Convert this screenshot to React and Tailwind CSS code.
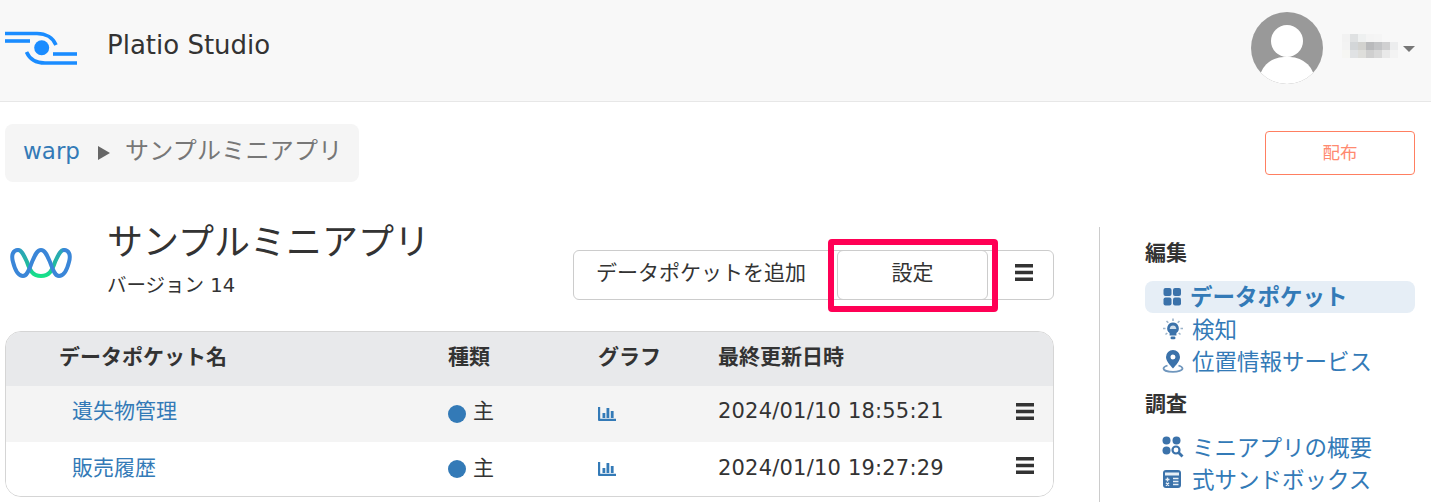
const blurCells = [
  "bg-[#f2f2f2]", "bg-[#dfe1e2]", "bg-[#eef0f0]", "bg-[#f4f4f4]", "bg-[#f5f5f5]", "bg-[#f8f8f8]", "bg-[#f8f8f8]",
  "bg-[#f3f3f3]", "bg-[#d3d6d8]", "bg-[#d2d2cf]", "bg-[#b9babc]", "bg-[#c3c4c6]", "bg-[#d0d0d1]", "bg-[#ecedee]",
  "bg-[#f6f6f3]", "bg-[#e0e2e4]", "bg-[#dededb]", "bg-[#cfcfcf]", "bg-[#d8d8d8]", "bg-[#e9e9e9]", "bg-[#f3f3f3]",
];

function Logo() {
  return (
    <svg width="72" height="36" viewBox="0 0 72 36" fill="none" stroke="#1a8cff" strokeWidth="3.600">
      <path d="M0 3.500H32C41 3.500 48 8 51 15" />
      <path d="M0 11H25" />
      <path d="M21.500 22C25 30 31 33 40 33H72" />
      <path d="M48 24H72" />
      <circle cx="36.700" cy="17.700" r="7.500" fill="#1a8cff" stroke="none" />
    </svg>
  );
}

function AppMark() {
  return (
    <svg width="62" height="32" viewBox="0 0 62 32" fill="none" strokeWidth="4" strokeLinecap="round">
      <defs>
        <linearGradient id="wave" gradientUnits="userSpaceOnUse" x1="0" y1="0" x2="0" y2="32">
          <stop offset="0" stopColor="#2f9fc0" />
          <stop offset="0.5" stopColor="#22b8a0" />
          <stop offset="1" stopColor="#14ea84" />
        </linearGradient>
      </defs>
      <path d="M8 3C12 3 14 9 17 15C20 24 23 29 31 29C39 29 42 24 45 15C48 9 50 3 54 3" stroke="url(#wave)" />
      <path d="M8 3C3 3 1 8 3 15C5 23 8 29 13 29C17 29 19 23 22 15C25 8 27 3 31 3C35 3 37 8 40 15C43 23 45 29 49 29C54 29 57 23 59 15C61 8 59 3 54 3" stroke="#3a86d8" />
    </svg>
  );
}

function Bars({ className = "" }) {
  return (
    <svg width="18" height="17" viewBox="0 0 18 17" fill="#333" className={className}>
      <rect x="0" y="0" width="18" height="3.500" />
      <rect x="0" y="6.750" width="18" height="3.500" />
      <rect x="0" y="13.500" width="18" height="3.500" />
    </svg>
  );
}

function ChartIcon() {
  return (
    <svg width="18" height="16" viewBox="0 0 18 16" fill="#337ab7">
      <path d="M0 1h2.200v11.800H18V15H1a1 1 0 0 1-1-1z" />
      <rect x="4.500" y="7" width="2.800" height="5" />
      <rect x="8.500" y="2" width="2.800" height="10" />
      <rect x="12.800" y="5" width="2.800" height="7" />
    </svg>
  );
}

function GridIcon() {
  return (
    <svg width="20" height="20" viewBox="0 0 20 20" fill="#3b72aa">
      <rect x="1.500" y="1" width="8" height="8" rx="2" />
      <rect x="11" y="1" width="8" height="8" rx="2" />
      <rect x="1.500" y="10.500" width="8" height="8" rx="2" />
      <rect x="11" y="10.500" width="8" height="8" rx="2" />
    </svg>
  );
}

function BulbIcon() {
  return (
    <svg width="22" height="22" viewBox="0 0 22 22" fill="#3b72aa">
      <path d="M11 4.500a5.800 5.800 0 0 1 3.400 10.500V17.500h-6.800V15A5.800 5.800 0 0 1 11 4.500z" />
      <rect x="8.500" y="18.500" width="5" height="2.800" rx="1.400" />
      <path d="M7.800 10a3.300 3.300 0 0 1 6.400 0v1H7.800z" fill="#cfdeeb" />
      <g stroke="#9db4ca" strokeWidth="1.600">
        <path d="M11 0.500v2.500M4.500 3l1.800 1.800M17.500 3l-1.800 1.800M1 10.500h2.500M18.500 10.500H21M3.500 16.500l1.800-1.500M18.500 16.500l-1.800-1.500" />
      </g>
    </svg>
  );
}

function PinIcon() {
  return (
    <svg width="22" height="23" viewBox="0 0 22 23">
      <path fillRule="evenodd" fill="#3b72aa" d="M11 0a7 7 0 0 1 7 7c0 4-4 8-7 11.500C8 15 4 11 4 7a7 7 0 0 1 7-7zm0 4.500a2.500 2.500 0 1 0 0 5 2.500 2.500 0 0 0 0-5z" />
      <path d="M5.500 15.500C3 16.300 1.500 17.300 1.500 18.500c0 2 4.500 3.300 9.500 3.300s9.500-1.300 9.500-3.300c0-1.200-1.500-2.200-4-3" fill="none" stroke="#6f96bd" strokeWidth="1.800" />
    </svg>
  );
}

function OverviewIcon() {
  return (
    <svg width="22" height="22" viewBox="0 0 22 22" fill="#3b72aa">
      <circle cx="4.500" cy="4.500" r="4" />
      <circle cx="14.500" cy="4.500" r="4" />
      <circle cx="4.500" cy="14.500" r="4" />
      <circle cx="14" cy="14" r="3.500" fill="none" stroke="#3b72aa" strokeWidth="2.200" />
      <path d="M16.500 16.500l4 4" stroke="#3b72aa" strokeWidth="2.800" />
    </svg>
  );
}

function CalcIcon() {
  return (
    <svg width="20" height="20" viewBox="0 0 20 20">
      <rect x="1" y="1" width="18" height="18" rx="3" fill="#3b72aa" />
      <rect x="3" y="3.500" width="14" height="3" fill="#e8eff6" />
      <g stroke="#e8eff6" strokeWidth="1.400">
        <path d="M3.500 10.500h4M5.500 8.500v4M11 9.500h5.500M11 12.500h5.500M11 15.500h5.500M4 13.800l3 3M7 13.800l-3 3" />
      </g>
    </svg>
  );
}

function SideLink({ icon, active, children }) {
  return (
    <a className={`flex h-[32px] items-center rounded-lg pl-[17px] text-[22.5px] leading-[32px] text-[#337ab7] ${active ? "bg-[#e6eef6] font-bold" : ""}`}>
      <span className="flex w-[30px] shrink-0 items-center">{icon}</span>
      <span className={active ? "-ml-[2px] pb-[1px]" : "pt-[1px]"}>{children}</span>
    </a>
  );
}

function Row({ name, date, striped, height, lift, barsLift }) {
  return (
    <div className={`flex items-center text-[21px] ${height} ${striped ? "bg-[#f4f4f4]" : "bg-white"}`}>
      <a className={`w-[442px] pl-[66px] text-[#337ab7] ${lift}`}>{name}</a>
      <div className="flex w-[150px] items-center gap-[7px] text-[#333]">
        <span className="h-[18px] w-[18px] rounded-full bg-[#337ab7]" />
        <span className={lift}>主</span>
      </div>
      <div className="flex w-[120px] items-center"><ChartIcon /></div>
      <div className={`w-[298px] tracking-[0.2px] text-[#333] ${lift}`}>{date}</div>
      <Bars className={barsLift} />
    </div>
  );
}

export default function App() {
  return (
    <div className="h-[502px] overflow-hidden bg-white text-[#333] font-['DejaVu_Sans','Noto_Sans_CJK_JP',sans-serif]">
      {/* header */}
      <header className="flex h-[102px] items-start border-b border-[#e7e7e7] bg-[#f8f8f8] pl-[5px] pr-4">
        <div className="mt-[30px]"><Logo /></div>
        <span className="ml-[30px] mt-[26px] text-[26px] leading-[38px]">Platio Studio</span>
        <div className="ml-auto mt-[12px] flex items-center">
          <div className="relative h-[72px] w-[72px] overflow-hidden rounded-full bg-[#999]">
            <span className="absolute left-[20px] top-[13px] h-[32px] w-[32px] rounded-full bg-white" />
            <span className="absolute left-[8px] top-[45px] h-[50px] w-[56px] rounded-full bg-white" />
          </div>
          <div className="ml-[19px] mb-[4px] grid w-[56px] grid-cols-7">
            {blurCells.map((c, i) => (
              <span key={i} className={`h-[8px] ${c}`} />
            ))}
          </div>
          <span className="ml-[5px] mt-[2px] h-0 w-0 border-x-[6px] border-t-[6px] border-x-transparent border-t-[#777]" />
        </div>
      </header>

      {/* breadcrumb row */}
      <div className="mt-[22px] flex items-start justify-between pl-[5px] pr-4">
        <div className="flex h-[58px] w-[354px] items-center rounded-lg bg-[#f5f5f5] pl-[18px] text-[24px]">
          <a className="pb-[4px] text-[23px] text-[#337ab7]">warp</a>
          <span className="ml-[18px] h-0 w-0 border-y-[7px] border-l-[12px] border-y-transparent border-l-[#666]" />
          <span className="ml-[15px] pb-[4px] tracking-[0.25px] text-[#777]">サンプルミニアプリ</span>
        </div>
        <button className="mt-[7px] h-[44px] w-[150px] rounded border border-[#ff7f61] text-[17.5px] text-[#ff8a70]">配布</button>
      </div>

      <div className="flex pl-[5px] pr-4">
        {/* main column */}
        <main className="w-[1049px] shrink-0">
          <div className="flex h-[149px] items-start">
            <div className="ml-[5px] mt-[65px]"><AppMark /></div>
            <div className="ml-[35px] mt-[33px]">
              <h1 className="text-[36px] leading-[56px]">サンプルミニアプリ</h1>
              <p className="text-[19.5px] leading-[30px]">バージョン 14</p>
            </div>
            <div className="relative ml-auto mt-[68px] flex h-[50px] w-[481px] items-center rounded-md border border-[#ccc] text-[21px]">
              <span className="w-[263px] pb-[3px] pl-[22px]">データポケットを追加</span>
              <button className="h-[50px] w-[151px] rounded-md border border-[#ccc] pb-[3px]">設定</button>
              <Bars className="mb-[6px] ml-[27px]" />
              <span className="absolute left-[254px] top-[-12px] h-[73px] w-[170px] rounded border-[6px] border-[#ff0055]" />
            </div>
          </div>

          <div className="overflow-hidden rounded-2xl border border-[#d5d5d5]">
            <div className="flex h-[54px] items-center bg-[#e8e9eb] text-[21px] font-bold">
              <div className="w-[442px] pb-[2px] pl-[53px]">データポケット名</div>
              <div className="w-[150px] pb-[2px]">種類</div>
              <div className="w-[120px] pb-[2px]">グラフ</div>
              <div className="pb-[2px]">最終更新日時</div>
            </div>
            <Row name="遺失物管理" date="2024/01/10 18:55:21" striped height="h-[56px]" lift="pb-[5px]" barsLift="mb-[6px]" />
            <Row name="販売履歴" date="2024/01/10 19:27:29" height="h-[54px]" lift="pb-[1px]" barsLift="mb-[8px]" />
          </div>
        </main>

        {/* right menu */}
        <aside className="ml-[45px] mt-[45px] min-h-[300px] flex-1 border-l border-[#ccc] pl-[45px] pt-[10px]">
          <h4 className="text-[21px] font-bold leading-[32px]">編集</h4>
          <nav className="mt-[12px]">
            <SideLink active icon={<GridIcon />}>データポケット</SideLink>
            <SideLink icon={<BulbIcon />}>検知</SideLink>
            <SideLink icon={<PinIcon />}>位置情報サービス</SideLink>
          </nav>
          <h4 className="mt-[11px] text-[21px] font-bold leading-[32px]">調査</h4>
          <nav className="mt-[11px]">
            <SideLink icon={<OverviewIcon />}>ミニアプリの概要</SideLink>
            <SideLink icon={<CalcIcon />}>式サンドボックス</SideLink>
          </nav>
        </aside>
      </div>
    </div>
  );
}
